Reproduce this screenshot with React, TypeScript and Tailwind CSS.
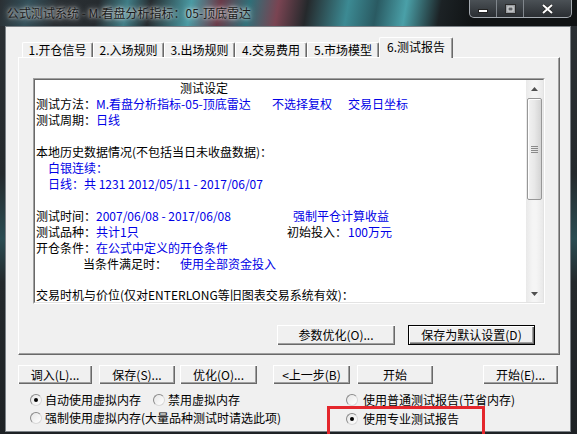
import React from 'react'

const blue = 'text-[#0000e6]'

function Tab({ label, active = false, w }: { label: string; active?: boolean; w: string }) {
  if (active) {
    return (
      <div
        className={`${w} relative z-10 -mb-px flex h-[21px] items-center justify-center rounded-t-[2px] border-t border-l border-r border-white border-r-[#696969] bg-[#f0f0f0] pb-[2px] shadow-[inset_-1px_0_0_#a0a0a0]`}
      >
        {label}
      </div>
    )
  }
  return (
    <div
      className={`${w} flex h-[15px] items-center justify-center rounded-t-[2px] border-t border-l border-r border-white border-r-[#696969] shadow-[inset_-1px_0_0_#a0a0a0]`}
    >
      {label}
    </div>
  )
}

function Btn({ label, className = '', def = false }: { label: string; className?: string; def?: boolean }) {
  if (def) {
    return (
      <div className={`${className} border border-black`}>
        <div className="flex h-full w-full items-center justify-center bg-[#f0f0f0] shadow-[inset_1px_1px_0_#ffffff,inset_-1px_-1px_0_#696969,inset_-2px_-2px_0_#a0a0a0]">
          {label}
        </div>
      </div>
    )
  }
  return (
    <div
      className={`${className} flex items-center justify-center bg-[#f0f0f0] shadow-[inset_1px_1px_0_#ffffff,inset_-1px_-1px_0_#696969,inset_-2px_-2px_0_#a0a0a0]`}
    >
      {label}
    </div>
  )
}

function Radio({ checked = false }: { checked?: boolean }) {
  return (
    <div className="flex h-[12px] w-[12px] shrink-0 items-center justify-center rounded-full border border-t-[#8a8a8a] border-l-[#8a8a8a] border-r-[#d8d8d8] border-b-[#d8d8d8] bg-[linear-gradient(135deg,#e6e6e6,#ffffff)]">
      {checked && <div className="h-[4px] w-[4px] rounded-full bg-black" />}
    </div>
  )
}

function Line({ children, className = '' }: { children?: React.ReactNode; className?: string }) {
  return <div className={`flex h-[16px] items-center whitespace-nowrap leading-[16px] ${className}`}>{children}</div>
}

function ScrollBar() {
  return (
    <div className="flex w-[17px] shrink-0 flex-col bg-[linear-gradient(90deg,#e9e9e9,#f5f5f5_40%,#f5f5f5_60%,#e9e9e9)]">
      <div className="flex h-[17px] items-center justify-center">
        <svg width="7" height="4" viewBox="0 0 7 4">
          <path d="M0 4 L3.5 0 L7 4 Z" fill="#505050" />
        </svg>
      </div>
      <div className="mx-[1px] mt-[1px] flex h-[102px] items-center justify-center rounded-[2px] border border-[#979797] bg-[linear-gradient(90deg,#f2f2f2,#e8e8e8_50%,#d4d4d4)] shadow-[inset_1px_1px_0_#ffffff]">
        <div className="flex flex-col gap-[1px]">
          <div className="h-px w-[7px] bg-[#8a8a8a]" />
          <div className="h-px w-[7px] bg-[#8a8a8a]" />
          <div className="h-px w-[7px] bg-[#8a8a8a]" />
          <div className="h-px w-[7px] bg-[#8a8a8a]" />
        </div>
      </div>
      <div className="flex-1" />
      <div className="flex h-[17px] items-center justify-center">
        <svg width="7" height="4" viewBox="0 0 7 4">
          <path d="M0 0 L3.5 4 L7 0 Z" fill="#505050" />
        </svg>
      </div>
    </div>
  )
}

export default function App() {
  return (
    <div className="relative flex h-[434px] w-[577px] flex-col overflow-hidden bg-[linear-gradient(180deg,#2c3135,#24292c_40%,#2a4c52_55%,#24292c_65%,#1e2225)] font-['Noto_Sans_CJK_SC','Noto_Sans',sans-serif] text-[12px] text-black">
      {/* title bar */}
      <div className="flex h-[26px] shrink-0 items-start justify-between bg-[linear-gradient(100deg,#2a2f33_0%,#33505a_5%,#2a2f33_10%,#262b2f_17%,#3f7d86_22%,#262b2f_26%,#4a9aa3_33%,#6a3a48_38%,#2f6f78_43%,#7a4452_48%,#25292c_53%,#3c8a93_60%,#2a5a62_65%,#4aa0a8_70%,#1c2225_76%,#101314_82%,#101314_100%)] pl-[7px] pr-[5px]">
        <div className="mt-[5px] text-[12px] leading-[16px] text-[#1a1a1a] [text-shadow:0_0_6px_rgba(255,255,255,0.85),0_0_3px_rgba(255,255,255,0.7)]">
          公式测试系统 - M.看盘分析指标：05-顶底雷达
        </div>
        <div className="flex h-[18px] overflow-hidden rounded-b-[5px] border border-t-0 border-[#a4aab0] bg-[linear-gradient(180deg,#4b5156,#2a2e32)]">
          <div className="flex w-[27px] items-end justify-center border-r border-[#80868c] pb-[4px]">
            <svg width="10" height="4" viewBox="0 0 10 4">
              <rect x="0.5" y="0.5" width="9" height="3" fill="#ffffff" stroke="#222" strokeWidth="1" />
            </svg>
          </div>
          <div className="flex w-[27px] items-center justify-center border-r border-[#80868c]">
            <svg width="11" height="10" viewBox="0 0 11 10">
              <rect x="0.5" y="0.5" width="10" height="9" fill="#9a9ea2" stroke="#2a2a2a" />
              <rect x="3" y="3" width="5" height="4" fill="#5c6064" stroke="#e0e0e0" strokeWidth="1" />
            </svg>
          </div>
          <div className="flex w-[47px] items-center justify-center">
            <svg width="11" height="10" viewBox="0 0 11 10">
              <path d="M1 1 L10 9 M10 1 L1 9" stroke="#222" strokeWidth="3.2" />
              <path d="M1 1 L10 9 M10 1 L1 9" stroke="#ffffff" strokeWidth="2" />
            </svg>
          </div>
        </div>
      </div>

      {/* client */}
      <div className="flex flex-1 pl-[5px] pr-[6px] pb-[2px]">
        <div className="flex flex-1 flex-col border border-[#7c8287] bg-[#f0f0f0] pl-[12px] pt-[10px]">
          {/* tabs */}
          <div className="flex h-[20px] items-end pl-[4px]">
            <Tab w="w-[71px]" label="1.开仓信号" />
            <Tab w="w-[71px]" label="2.入场规则" />
            <Tab w="w-[71px]" label="3.出场规则" />
            <Tab w="w-[72px]" label="4.交易费用" />
            <Tab w="w-[72px]" label="5.市场模型" />
            <Tab w="w-[74px]" label="6.测试报告" active />
          </div>

          {/* panel */}
          <div className="flex h-[298px] w-[542px] flex-col border border-white border-r-[#696969] border-b-[#696969] pl-[14px] pt-[20px] shadow-[inset_-1px_-1px_0_#a0a0a0]">
            <div className="h-[226px] w-[512px] border border-[#a0a0a0] border-r-white border-b-white">
              <div className="flex h-full w-full border border-[#696969] border-r-[#e3e3e3] border-b-[#e3e3e3] bg-white">
                <div className="flex-1 overflow-hidden pl-[1px]">
                  <Line className="pl-[144px]">测试设定</Line>
                  <Line>
                    <span className="w-[60px] shrink-0">测试方法：</span>
                    <span className={`w-[176px] shrink-0 ${blue}`}>M.看盘分析指标-05-顶底雷达</span>
                    <span className={`w-[76px] shrink-0 ${blue}`}>不选择复权</span>
                    <span className={blue}>交易日坐标</span>
                  </Line>
                  <Line>
                    <span className="w-[60px] shrink-0">测试周期：</span>
                    <span className={blue}>日线</span>
                  </Line>
                  <Line />
                  <Line>本地历史数据情况(不包括当日未收盘数据)：</Line>
                  <Line className={`pl-[12px] ${blue}`}>白银连续：</Line>
                  <Line className={`pl-[12px] ${blue}`}>日线：共 1231 2012/05/11 - 2017/06/07</Line>
                  <Line />
                  <Line>
                    <span className="w-[60px] shrink-0">测试时间：</span>
                    <span className={`w-[197px] shrink-0 ${blue}`}>2007/06/08 - 2017/06/08</span>
                    <span className={blue}>强制平仓计算收益</span>
                  </Line>
                  <Line>
                    <span className="w-[60px] shrink-0">测试品种：</span>
                    <span className={`w-[191px] shrink-0 ${blue}`}>共计1只</span>
                    <span className="w-[61px] shrink-0">初始投入：</span>
                    <span className={blue}>100万元</span>
                  </Line>
                  <Line>
                    <span className="w-[60px] shrink-0">开仓条件：</span>
                    <span className={blue}>在公式中定义的开仓条件</span>
                  </Line>
                  <Line className="pl-[47px]">
                    <span className="w-[97px] shrink-0">当条件满足时：</span>
                    <span className={blue}>使用全部资金投入</span>
                  </Line>
                  <Line />
                  <div className="flex h-[14px] items-end whitespace-nowrap leading-[14px]">
                    交易时机与价位(仅对ENTERLONG等旧图表交易系统有效)：
                  </div>
                </div>
                <ScrollBar />
              </div>
            </div>

            <div className="mt-[21px] flex w-[512px] justify-end gap-[13px] pr-[10px]">
              <Btn label="参数优化(O)..." className="h-[20px] w-[118px]" />
              <Btn label="保存为默认设置(D)" className="h-[20px] w-[127px]" def />
            </div>
          </div>

          {/* bottom buttons */}
          <div className="mt-[10px] flex h-[19px]">
            <Btn label="调入(L)..." className="w-[74px]" />
            <Btn label="保存(S)..." className="ml-[7px] w-[76px]" />
            <Btn label="优化(O)..." className="ml-[5px] w-[77px]" />
            <Btn label="<上一步(B)" className="ml-[16px] w-[77px]" />
            <Btn label="开始" className="ml-[7px] w-[76px]" />
            <Btn label="开始(E)..." className="ml-[50px] w-[75px]" />
          </div>

          {/* radios */}
          <div className="mt-[7px] flex flex-col pl-[12px]">
            <div className="flex h-[18px] items-center whitespace-nowrap">
              <div className="flex w-[316px] items-center">
                <Radio checked />
                <span className="ml-[3px]">自动使用虚拟内存</span>
                <div className="ml-[12px]">
                  <Radio />
                </div>
                <span className="ml-[3px]">禁用虚拟内存</span>
              </div>
              <Radio />
              <span className="ml-[5px]">使用普通测试报告(节省内存)</span>
            </div>
            <div className="flex h-[18px] items-center whitespace-nowrap">
              <div className="flex w-[316px] items-center">
                <Radio />
                <span className="ml-[3px]">强制使用虚拟内存(大量品种测试时请选此项)</span>
              </div>
              <div className="mt-[2px] flex items-center">
                <Radio checked />
                <span className="ml-[5px]">使用专业测试报告</span>
              </div>
            </div>
          </div>
        </div>
      </div>

      {/* annotation */}
      <div className="absolute left-[327px] top-[406px] h-[34px] w-[158px] border-[3px] border-[#e4262c]" />
    </div>
  )
}
